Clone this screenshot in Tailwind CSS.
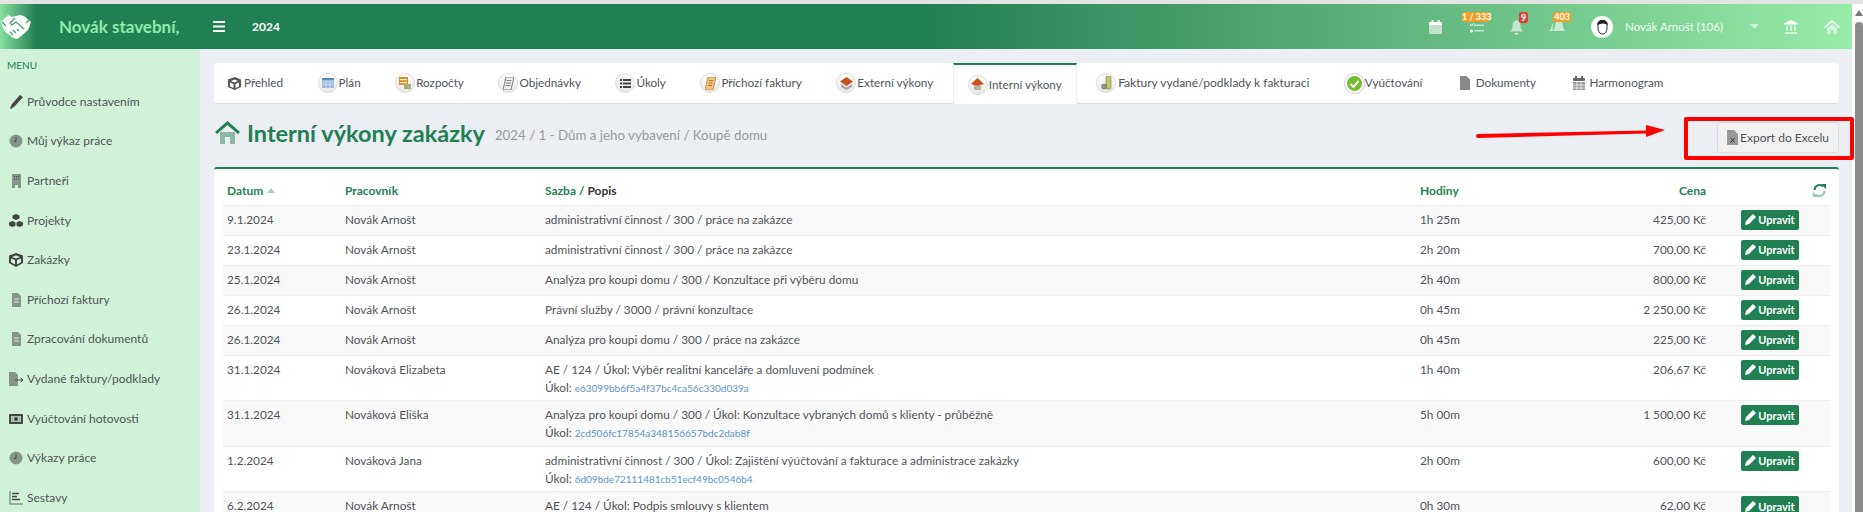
<!DOCTYPE html>
<html lang="cs">
<head>
  <meta charset="UTF-8">
  <title>Interní výkony zakázky</title>
  <script src="https://cdn.jsdelivr.net/npm/@tailwindcss/browser@4"></script>
</head>
<body class="h-[512px] w-[1863px] overflow-hidden bg-white font-['Lato',sans-serif] text-[12px] text-[#505458]">
  <div class="h-[4px] bg-[#e3e3e3]"></div>
  <div class="relative flex h-[508px]">
    <div class="flex h-full w-[1852px] flex-col bg-[#ebeef3]">

      <!-- Header -->
      <header class="flex h-[45px] shrink-0 items-center bg-gradient-to-r from-[#217f54] from-50% to-[#97eca8] text-white">
        <div class="flex h-full w-[200px] items-center bg-gradient-to-r from-[#86e09f] to-[#217f54] to-[18%]">
          <svg class="ml-[1px] h-[26px] w-[30px]" viewBox="0 0 30 26" fill="white">
            <path d="M0 8 7 1l4 2 4-1 4-1 4 1 7 6-3 8-8 7-3 2-4-1-3-3-4-2-3-5z"/>
            <path d="M14 4 9 9l2 2 4-3 8 7M9 18l3 3M12 16l3 3M16 15l2 2M5 12 1 8M25 9l3-3" fill="none" stroke="#3f9a6c" stroke-width="1.200"/>
          </svg>
          <span class="ml-[28px] text-[17px] font-bold whitespace-nowrap text-[#90eaa8]">Novák stavební,</span>
        </div>
        <svg class="ml-[13px] h-[11px] w-[12px]" viewBox="0 0 12 11" fill="white"><rect width="12" height="2"/><rect width="12" height="2" y="4.500"/><rect width="12" height="2" y="9"/></svg>
        <span class="ml-[27px] text-[12px] font-bold">2024</span>

        <div class="ml-auto flex items-center text-white/60">
          <svg class="h-[14px] w-[13px]" viewBox="0 0 13 14" fill="currentColor"><rect y="2" width="13" height="12" rx="1"/><rect y="2" width="13" height="3" rx="1" fill="white"/><rect x="2.500" width="2" height="3" fill="white"/><rect x="8.500" width="2" height="3" fill="white"/></svg>
          <div class="relative ml-[28px] h-[14px] w-[14px]">
            <svg class="mt-[3px] h-[11px] w-[14px]" viewBox="0 0 14 11" fill="currentColor"><rect x="4" y="1.500" width="10" height="1.500"/><rect x="4" y="7" width="10" height="1.500"/><circle cx="1.500" cy="8" r="1.500" fill="white"/><path d="M0 1l1.500 2L4 0" fill="none" stroke="white"/></svg>
            <span class="absolute top-[-8px] left-[-8px] w-[28px] rounded-[2px] bg-[#ef9f27] text-center text-[9px] leading-[10px] font-bold whitespace-nowrap text-white">1 / 333</span>
          </div>
          <div class="relative ml-[26px] h-[14px] w-[13px]">
            <svg class="h-[15px] w-[13px]" viewBox="0 0 13 15" fill="currentColor"><path d="M6.500 0C3.500 1 2.500 3 2.500 6 2.500 9 1.500 10 0 11.500h13C11.500 10 10.500 9 10.500 6c0-3-1-5-4-6z"/><path d="M4.500 13h4l-2 2z" fill="white"/></svg>
            <span class="absolute top-[-8px] left-[9px] h-[11px] w-[9px] rounded-[2px] bg-[#d9433a] text-center text-[9px] leading-[11px] font-bold text-white">9</span>
          </div>
          <div class="relative ml-[25px] h-[14px] w-[17px]">
            <svg class="h-[14px] w-[17px]" viewBox="0 0 17 14" fill="currentColor"><path d="M11 0c3 1 4 3 4 6 0 2 1 3 2 5H5c1-2 2-3 2-5 0-3 1-5 4-6z"/><path d="M5 3C4 4 3.500 5 3.500 7c0 1.500-1.500 3-3.500 4h4.500z"/></svg>
            <span class="absolute top-[-8px] left-[5px] w-[18px] rounded-[2px] bg-[#ef9f27] text-center text-[9px] leading-[10px] font-bold text-white">403</span>
          </div>
          <div class="ml-[26px] flex h-[22px] w-[22px] items-center justify-center overflow-hidden rounded-full bg-white">
            <svg class="h-[19px] w-[15px]" viewBox="0 0 16 20"><path d="M3 8c-1-6 11-6 10 0l-.5 6c-1 3-2 4-4.500 4s-3.500-1-4.500-4z" fill="white" stroke="#222"/><path d="M3 9C1 1 15 1 13 9c-1-3-8-3-10 0z" fill="#222"/></svg>
          </div>
          <span class="ml-[12px] text-[11.500px] text-white/95">Novák Arnošt (106)</span>
          <svg class="ml-[27px] h-[5px] w-[9px]" viewBox="0 0 9 5" fill="currentColor"><path d="M0 0h9L4.500 5z"/></svg>
          <svg class="ml-[25px] h-[14px] w-[14px]" viewBox="0 0 14 14" fill="currentColor"><path d="M7 0l7 3.500v1H0v-1z" fill="white"/><path d="M1 12h12v2H1zM2 5.500h2V11H2zM6 5.500h2V11H6zM10 5.500h2V11h-2z"/></svg>
          <svg class="mr-[12px] ml-[26px] h-[14px] w-[16px]" viewBox="0 0 16 14" fill="currentColor"><path d="M8 0l8 7-1 1-7-6-7 6-1-1z" fill="white"/><path d="M3 8l5-4 5 4v6H9.500v-4h-3v4H3z"/></svg>
        </div>
      </header>

      <div class="flex min-h-0 flex-1">
        <!-- Sidebar -->
        <aside class="w-[200px] shrink-0 bg-[#d0f3d8]">
          <div class="mt-[10px] mb-[11px] pl-[7px] text-[10px] leading-[12px] text-[#217f54]">MENU</div>
          <ul id="menu" class="pl-[9px]"></ul>
        </aside>

        <!-- Main -->
        <main class="min-w-0 flex-1 pt-[14px] pr-[13px] pl-[14px]">
          <nav class="flex h-[41px] items-stretch gap-[4.500px] rounded-[3px] border-b border-[#dcdfe3] bg-white text-[11.700px]">
            <a class="flex items-center gap-[3px] pr-[15px] pl-[14px]">
              <svg class="h-[13px] w-[13px]" viewBox="0 0 13 13" fill="#555"><path d="M6.500 0 13 2.500V10l-6.500 3L0 10V2.500zM6.500 5.500 10 4 6.500 2.500 3 4zM7.500 7v4l3.500-1.500v-4zM5.500 7 2 5.500v4L5.500 11z"/></svg>Přehled
            </a>
            <a class="flex items-center gap-[1px] px-[15px]">
              <span class="flex h-[20px] w-[20px] items-center justify-center rounded-full border border-[#ddd] bg-gradient-to-b from-white to-[#e8e8e8]"><svg class="h-[10px] w-[12px]" viewBox="0 0 12 10"><rect width="12" height="10" fill="#9db9dc"/><rect width="12" height="2" fill="#5f86b8"/><path d="M1 4h10M1 6.500h10M4 3v7M8 3v7" stroke="#e6eef7" stroke-width=".6"/></svg></span>Plán
            </a>
            <a class="flex items-center gap-[1px] px-[15px]">
              <span class="flex h-[20px] w-[20px] items-center justify-center rounded-full border border-[#ddd] bg-gradient-to-b from-white to-[#e8e8e8]"><svg class="h-[12px] w-[12px]" viewBox="0 0 12 12"><rect width="9" height="8" fill="#d98e2b"/><rect x="1" y="2" width="7" height="1.200" fill="#fff0cf"/><rect x="1" y="5" width="7" height="1.200" fill="#fff0cf"/><rect x="5" y="7" width="7" height="5" fill="#a9ad7a"/></svg></span>Rozpočty
            </a>
            <a class="flex items-center gap-[1px] px-[15px]">
              <span class="flex h-[20px] w-[20px] items-center justify-center rounded-full border border-[#ddd] bg-gradient-to-b from-white to-[#e8e8e8]"><svg class="h-[13px] w-[11px]" viewBox="0 0 11 13"><path d="M3 0h8L8 13H0z" fill="#eee" stroke="#666" stroke-width=".8"/><path d="M3.500 3.500h5M3 6h5M2.500 8.500h5" stroke="#666" stroke-width=".8"/></svg></span>Objednávky
            </a>
            <a class="flex items-center gap-[1px] px-[15px]">
              <span class="flex h-[20px] w-[20px] items-center justify-center rounded-full border border-[#ddd] bg-gradient-to-b from-white to-[#e8e8e8]"><svg class="h-[9px] w-[11px]" viewBox="0 0 11 9" fill="#444"><rect width="2" height="2"/><rect x="3" width="8" height="2"/><rect y="3.500" width="2" height="2"/><rect x="3" y="3.500" width="8" height="2"/><rect y="7" width="2" height="2"/><rect x="3" y="7" width="8" height="2"/></svg></span>Úkoly
            </a>
            <a class="flex items-center gap-[1px] px-[15px]">
              <span class="flex h-[20px] w-[20px] items-center justify-center rounded-full border border-[#ddd] bg-gradient-to-b from-white to-[#e8e8e8]"><svg class="h-[13px] w-[11px]" viewBox="0 0 11 13"><path d="M3 0h8L8 13H0z" fill="#f0c67e" stroke="#b07a2a" stroke-width=".7"/><path d="M4 3.500h4M3.500 6h4M3 8.500h4" stroke="#9a5f18" stroke-width=".8"/></svg></span>Příchozí faktury
            </a>
            <a class="flex items-center gap-[1px] px-[15px]">
              <span class="flex h-[20px] w-[20px] items-center justify-center rounded-full border border-[#ddd] bg-gradient-to-b from-white to-[#e8e8e8]"><svg class="h-[13px] w-[13px]" viewBox="0 0 13 13"><path d="M6.500 0 13 4.500 6.500 9 0 4.500z" fill="#c9501f"/><path d="M1 7l5.500 3.500L12 7v3l-5.500 3L1 10z" fill="#a8a8a0"/></svg></span>Externí výkony
            </a>
            <a class="-mb-px flex items-center gap-[1px] border-x border-t-2 border-x-[#eeeeee] border-t-[#217f54] bg-white px-[14px]">
              <span class="flex h-[20px] w-[20px] items-center justify-center rounded-full border border-[#ddd] bg-gradient-to-b from-white to-[#e8e8e8]"><svg class="h-[13px] w-[13px]" viewBox="0 0 13 13"><path d="M6.500 0 13 6 6.500 8 0 6z" fill="#c9501f"/><path d="M3 7l3.500 1L10 7v5H3z" fill="#b9b2a0"/></svg></span>Interní výkony
            </a>
            <a class="flex items-center gap-[2px] px-[15px] text-[12px]">
              <span class="flex h-[20px] w-[20px] items-center justify-center rounded-full border border-[#ddd] bg-gradient-to-b from-white to-[#e8e8e8]"><svg class="h-[14px] w-[11px]" viewBox="0 0 11 14"><rect x="5" width="5" height="13" rx="1" fill="#c6c46a" stroke="#777" stroke-width=".6"/><circle cx="3" cy="10.500" r="2.500" fill="#8f9b6c" stroke="#666" stroke-width=".6"/></svg></span>Faktury vydané/podklady k fakturaci
            </a>
            <a class="flex items-center gap-[0px] px-[15px]">
              <span class="flex h-[21px] w-[21px] items-center justify-center rounded-full border border-[#ccc] bg-white"><svg class="h-[15px] w-[15px]" viewBox="0 0 15 15"><circle cx="7.500" cy="7.500" r="7.500" fill="#74bd2d"/><path d="M3.500 8l3 3 5-6" fill="none" stroke="white" stroke-width="2"/></svg></span>Vyúčtování
            </a>
            <a class="flex items-center gap-[6px] pr-[15px] pl-[18px]">
              <svg class="h-[14px] w-[10px]" viewBox="0 0 10 14" fill="#888"><path d="M0 0h6.500L10 3.500V14H0z"/></svg>Dokumenty
            </a>
            <a class="flex items-center gap-[5px] pr-[15px] pl-[17px]">
              <svg class="h-[14px] w-[12px]" viewBox="0 0 12 14" fill="#666"><rect y="2" width="12" height="3" rx="1"/><rect x="2" width="2" height="3"/><rect x="8" width="2" height="3"/><path d="M0 6h12v8H0z" fill="#999"/><path d="M4 6v8M8 6v8M0 9h12M0 12h12" stroke="white" stroke-width=".7"/></svg>Harmonogram
            </a>
          </nav>

          <div class="flex h-[63px] items-start">
            <svg class="mt-[17px] ml-[1px] h-[23px] w-[25px]" viewBox="0 0 25 23" fill="#8db8a4"><path d="M5 11h15v12h-5v-7h-5v7H5z"/><path d="M12.500 0 25 11l-2 2L12.500 4 2 13l-2-2z" fill="#217f54"/></svg>
            <h1 class="mt-[14px] ml-[7px] text-[23.500px] leading-[30px] font-bold whitespace-nowrap text-[#217f54]">Interní výkony zakázky</h1>
            <span class="mt-[21px] ml-[10px] text-[13.300px] leading-[20px] text-[#9a9a9a]">2024 / 1 - Dům a jeho vybavení / Koupě domu</span>
            <button class="mt-[18px] ml-auto flex h-[31px] w-[122px] items-center justify-center gap-[2px] rounded-[3px] border border-[#dddddd] bg-[#f1f1f1] text-[12px]">
              <svg class="h-[15px] w-[11px]" viewBox="0 0 11 15"><path d="M0 0h7l4 4v11H0z" fill="#999"/><path d="M3.500 8l4 4.500M7.500 8l-4 4.500" stroke="#333"/></svg>Export do Excelu
            </button>
          </div>

          <!-- Table -->
          <section class="rounded-[3px] border-t-2 border-[#217f54] bg-white px-[9px]">
            <table class="w-full table-fixed text-[11.800px] leading-[18px]">
              <colgroup><col class="w-[118px]"><col class="w-[200px]"><col class="w-[875px]"><col class="w-[144px]"><col class="w-[150px]"><col class="w-[120px]"></colgroup>
              <thead>
                <tr class="h-[36px] text-left text-[12px] font-bold text-[#217f54]">
                  <th class="pt-[8px] pl-[4px]">Datum <svg class="mb-[3px] ml-[1px] inline h-[5px] w-[8px]" viewBox="0 0 8 5" fill="#a8d0bc"><path d="M4 0l4 5H0z"/></svg></th>
                  <th class="pt-[8px] pl-[4px]">Pracovník</th>
                  <th class="pt-[8px] pl-[4px]">Sazba / <span class="text-[#333]">Popis</span></th>
                  <th class="pt-[8px] pl-[4px]">Hodiny</th>
                  <th class="pt-[8px] pr-[4px] text-right">Cena</th>
                  <th class="pt-[8px] pr-[4px] text-right">
                    <svg class="ml-auto h-[13px] w-[13px]" viewBox="0 0 13 13" fill="none" stroke-width="2"><path d="M1.500 6A5 5 0 0 1 10 2.500" stroke="#217f54"/><path d="M8 0h5v5z" fill="#217f54"/><path d="M11.500 7A5 5 0 0 1 3 10.500" stroke="#8cc9a8"/><path d="M5 13H0V8z" fill="#8cc9a8"/></svg>
                  </th>
                </tr>
              </thead>
              <tbody id="rows"></tbody>
            </table>
          </section>
        </main>
      </div>
    </div>

    <!-- Scrollbar -->
    <div class="relative flex-1 bg-white">
      <svg class="absolute top-[6px] left-[3px] h-[6px] w-[8px]" viewBox="0 0 8 6" fill="#777"><path d="M4 0l4 6H0z"/></svg>
      <div class="absolute top-[18px] bottom-0 left-[3px] w-[8px] rounded-t-[4px] bg-[#8c8c8c]"></div>
    </div>
  </div>

  <!-- Annotation -->
  <svg class="absolute top-[120px] left-[1470px] h-[24px] w-[200px]" viewBox="0 0 200 24" fill="#ff0000"><path d="M8 14 176 10.500V5l19 5-19 7v-3.500L8 18z"/><circle cx="8" cy="16" r="2"/></svg>
  <div class="absolute top-[117px] left-[1684px] h-[43px] w-[170px] rounded-[2px] border-4 border-[#ff0000]"></div>

  <script>
    const pencil = '<svg class="h-[11px] w-[11px]" viewBox="0 0 11 11" fill="white"><path d="M8 0l3 3-7 7-4 1 1-4z"/></svg>';

    const menu = [
      ['Průvodce nastavením', '<path d="M11 0l3 2-8 9-4 3-1-1 2-4z" fill="#444"/>'],
      ['Můj výkaz práce', '<circle cx="7" cy="7" r="6.500" fill="#85958a"/><path d="M7 3v4.500H5" fill="none" stroke="#444"/>'],
      ['Partneři', '<path d="M3 0h9v14H9v-3H6v3H3z" fill="#85958a"/><path d="M5 2.500h1M7 2.500h1M9 2.500h1M5 5h1M7 5h1M9 5h1" stroke="#444"/>'],
      ['Projekty', '<path d="M7 0l3.500 1.500v3L7 6 3.500 4.500v-3zM3.500 7l3 1.500v3L3.500 13 0 11.500v-3zM10.500 7 14 8.500v3L10.500 13l-3-1.500v-3z" fill="#444"/>'],
      ['Zakázky', '<path d="M7 0l7 2.500V10l-7 4-7-4V2.500zM7 5.500 11 4 7 2.500 3 4zM8 7v4.500l4-2.200V5.500zM6 7 2 5.500v3.800L6 11.500z" fill="#444"/>'],
      ['Příchozí faktury', '<path d="M3 0h6l3 3v11H3z" fill="#85958a"/><path d="M5 6h5M5 9h5" stroke="#d0f3d8"/>'],
      ['Zpracování dokumentů', '<path d="M3 0h6l3 3v11H3z" fill="#85958a"/><path d="M5 6h5M5 9h5" stroke="#d0f3d8"/>'],
      ['Vydané faktury/podklady', '<path d="M0 0h6l3 3v11H0z" fill="#85958a"/><path d="M6 8h8M11.500 6 14 8l-2.500 2" fill="none" stroke="#444"/>'],
      ['Vyúčtování hotovosti', '<rect y="2" width="14" height="10" rx="1" fill="#444"/><rect x="2" y="4" width="10" height="6" fill="#a9c4b0"/><circle cx="7" cy="7" r="2" fill="#444"/>'],
      ['Výkazy práce', '<circle cx="7" cy="7" r="6.500" fill="#85958a"/><path d="M7 3v4.500H5" fill="none" stroke="#444"/>'],
      ['Sestavy', '<path d="M1 0v13h13" fill="none" stroke="#85958a" stroke-width="1.500"/><path d="M3 2.500h7M3 5.500h5M3 8.500h8" stroke="#444" stroke-width="1.500"/>'],
    ];

    document.getElementById('menu').innerHTML = menu.map(([label, icon]) => `
      <li class="flex h-[39.600px] items-center gap-[4px] whitespace-nowrap">
        <svg class="h-[14px] w-[14px] shrink-0" viewBox="0 0 14 14">${icon}</svg>${label}
      </li>`).join('');

    const rows = [
      ['9.1.2024', 'Novák Arnošt', 'administrativní činnost / 300 / práce na zakázce', '', '1h 25m', '425,00 Kč'],
      ['23.1.2024', 'Novák Arnošt', 'administrativní činnost / 300 / práce na zakázce', '', '2h 20m', '700,00 Kč'],
      ['25.1.2024', 'Novák Arnošt', 'Analýza pro koupi domu / 300 / Konzultace při výběru domu', '', '2h 40m', '800,00 Kč'],
      ['26.1.2024', 'Novák Arnošt', 'Právní služby / 3000 / právní konzultace', '', '0h 45m', '2 250,00 Kč'],
      ['26.1.2024', 'Novák Arnošt', 'Analýza pro koupi domu / 300 / práce na zakázce', '', '0h 45m', '225,00 Kč'],
      ['31.1.2024', 'Nováková Elizabeta', 'AE / 124 / Úkol: Výběr realitní kanceláře a domluvení podmínek', 'e63099bb6f5a4f37bc4ca56c330d039a', '1h 40m', '206,67 Kč'],
      ['31.1.2024', 'Nováková Eliška', 'Analýza pro koupi domu / 300 / Úkol: Konzultace vybraných domů s klienty - průběžně', '2cd506fc17854a348156657bdc2dab8f', '5h 00m', '1 500,00 Kč'],
      ['1.2.2024', 'Nováková Jana', 'administrativní činnost / 300 / Úkol: Zajištění výúčtování a fakturace a administrace zakázky', '6d09bde72111481cb51ecf49bc0546b4', '2h 00m', '600,00 Kč'],
      ['6.2.2024', 'Novák Arnošt', 'AE / 124 / Úkol: Podpis smlouvy s klientem', '', '0h 30m', '62,00 Kč'],
    ];

    document.getElementById('rows').innerHTML = rows.map(([date, who, desc, task, hours, price]) => `
      <tr class="border-t border-[#eeeeee] odd:bg-[#f9f9f9] ${task ? 'h-[45.500px]' : 'h-[30px]'}">
        <td class="pt-[5px] pl-[4px] align-top">${date}</td>
        <td class="pt-[5px] pl-[4px] align-top">${who}</td>
        <td class="pt-[5px] pl-[4px] align-top">${desc}${task ? `<br>Úkol: <a class="text-[10px] text-[#5b93c7]">${task}</a>` : ''}</td>
        <td class="pt-[5px] pl-[4px] align-top">${hours}</td>
        <td class="pt-[5px] pr-[4px] text-right align-top">${price}</td>
        <td class="pt-[4px] pl-[31px] align-top">
          <button class="flex h-[20px] w-[58px] items-center justify-center gap-[2px] rounded-[2px] bg-[#217f54] text-[11px] leading-[11px] font-bold text-white">${pencil}Upravit</button>
        </td>
      </tr>`).join('');
  </script>
</body>
</html>
